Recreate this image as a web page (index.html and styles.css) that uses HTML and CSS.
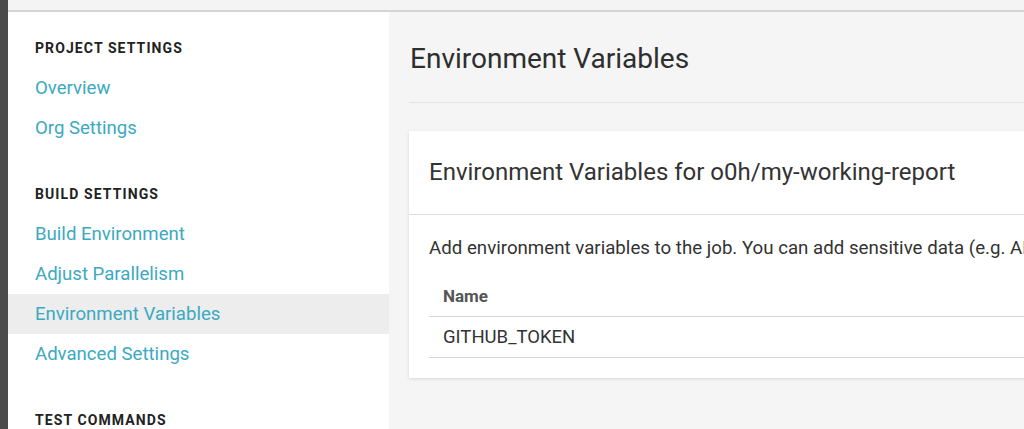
FILE: index.html
```html
<!DOCTYPE html>
<html>
<head>
<meta charset="utf-8">
<link rel="stylesheet" href="styles.css">
</head>
<body>
<div class="app">
  <div class="rail"></div>
  <div class="page">
    <div class="topband"></div>
    <div class="content">
      <nav class="sidebar">
        <div class="section">
          <div class="section-title">PROJECT SETTINGS</div>
          <a class="nav-link">Overview</a>
          <a class="nav-link">Org Settings</a>
        </div>
        <div class="section">
          <div class="section-title">BUILD SETTINGS</div>
          <a class="nav-link">Build Environment</a>
          <a class="nav-link">Adjust Parallelism</a>
          <a class="nav-link active">Environment Variables</a>
          <a class="nav-link">Advanced Settings</a>
        </div>
        <div class="section">
          <div class="section-title">TEST COMMANDS</div>
        </div>
      </nav>
      <main class="main">
        <h1 class="page-title">Environment Variables</h1>
        <div class="card">
          <div class="card-header">Environment Variables for o0h/my-working-report</div>
          <div class="card-body">
            <p class="desc">Add environment variables to the job. You can add sensitive data (e.g. API keys) here.</p>
            <table class="vars">
              <thead><tr><th>Name</th></tr></thead>
              <tbody><tr><td>GITHUB_TOKEN</td></tr></tbody>
            </table>
          </div>
        </div>
      </main>
    </div>
  </div>
</div>
</body>
</html>
```
FILE: styles.css
```css
html, body {
  margin: 0;
  padding: 0;
  height: 100%;
  overflow: hidden;
}
body {
  font-family: Roboto, "Liberation Sans", sans-serif;
  background: #f5f5f5;
  color: #333;
}
.app {
  display: flex;
  height: 100%;
}
.rail {
  width: 8px;
  flex: none;
  background: #4b4b4b;
}
.page {
  flex: 1;
  display: flex;
  flex-direction: column;
  min-width: 0;
}
.topband {
  height: 10px;
  background: #f4f4f4;
  border-bottom: 2px solid #d4d4d4;
  flex: none;
}
.content {
  flex: 1;
  display: flex;
  min-height: 0;
}
.sidebar {
  width: 381px;
  flex: none;
  background: #fff;
  padding-top: 26px;
}
.section + .section {
  margin-top: 36px;
}
.section-title {
  padding-left: 27px;
  font-size: 14px;
  line-height: 20px;
  font-weight: 700;
  letter-spacing: 1.1px;
  color: #222;
  margin-bottom: 10px;
}
.nav-link {
  display: block;
  height: 40px;
  line-height: 40px;
  padding-left: 27px;
  font-size: 18.6px;
  color: #3ba9c1;
  text-decoration: none;
}
.nav-link.active {
  background: #ededed;
}
.main {
  flex: 1;
  padding: 31px 0 0 20px;
  min-width: 0;
}
.page-title {
  margin: 0;
  width: 800px;
  font-size: 28px;
  line-height: 32px;
  font-weight: 400;
  color: #2e2e2e;
  padding: 0 0 27px 1px;
  border-bottom: 1px solid #e2e2e2;
}
.card {
  margin-top: 28px;
  width: 800px;
  background: #fff;
  box-shadow: 0 1px 3px rgba(0, 0, 0, 0.12);
}
.card-header {
  padding: 26px 20px 27px 20px;
  font-size: 24px;
  line-height: 30px;
  color: #333;
  border-bottom: 1px solid #dcdcdc;
}
.card-body {
  padding: 21px 20px 20px 20px;
}
.desc {
  margin: 0 0 16px 0;
  font-size: 18.7px;
  line-height: 24px;
  white-space: nowrap;
  color: #333;
}
.vars {
  width: 100%;
  border-collapse: collapse;
}
.vars th, .vars td {
  text-align: left;
  padding: 0 14px;
  height: 40px;
  border-bottom: 1px solid #d6d6d6;
}
.vars th {
  font-size: 17px;
  font-weight: 700;
  color: #555;
}
.vars td {
  font-size: 18.5px;
  color: #333;
}
```
